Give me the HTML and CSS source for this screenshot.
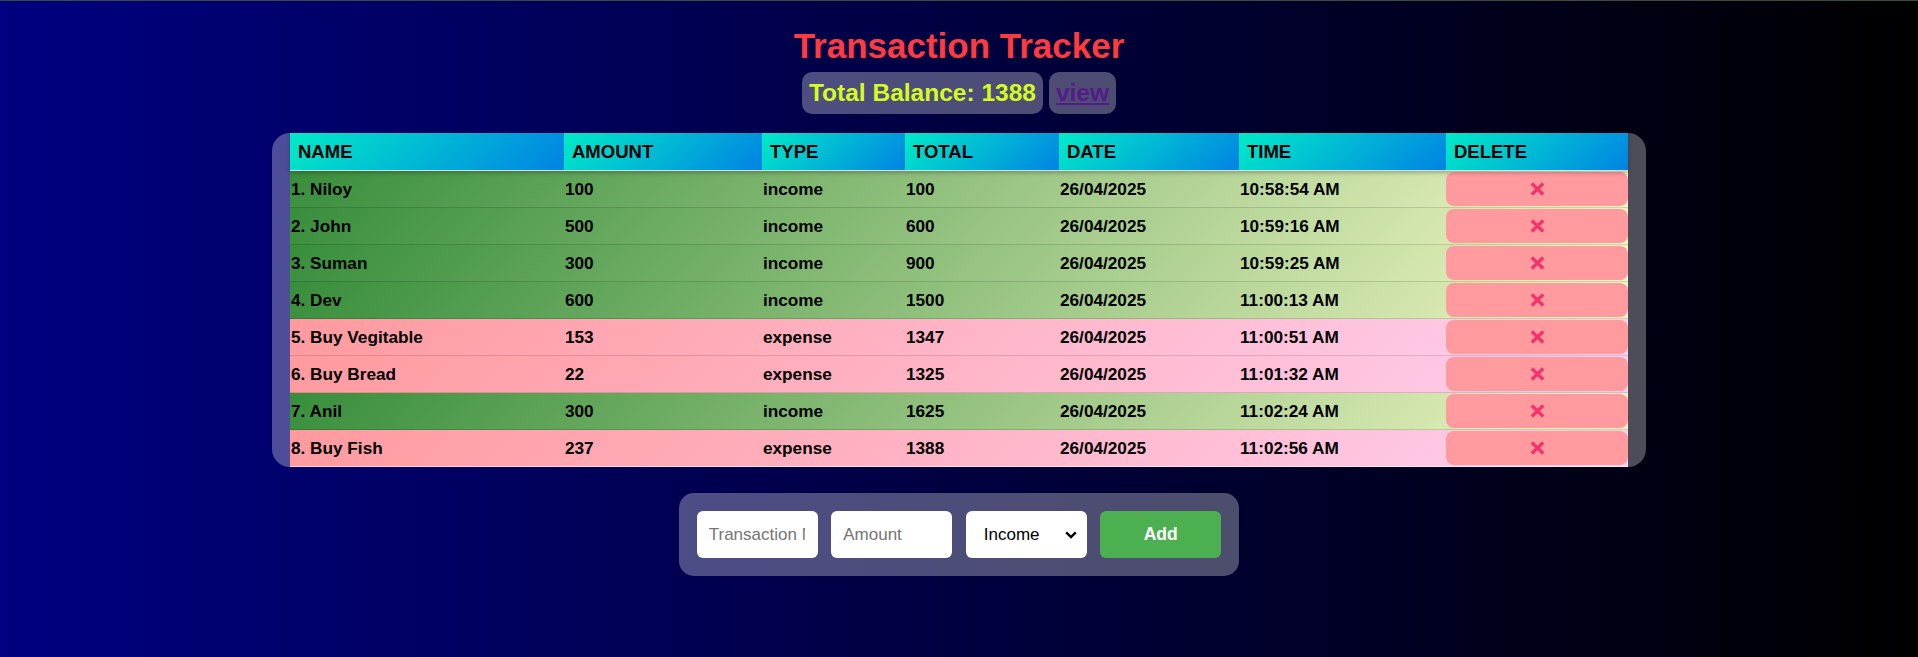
FILE: index.html
```html
<!DOCTYPE html>
<html lang="en">
<head>
<meta charset="utf-8">
<title>Transaction Tracker</title>
<link rel="stylesheet" href="styles.css">
</head>
<body>
<main class="app">
  <h1 class="title">Transaction Tracker</h1>
  <div class="balance-row">
    <span class="pill balance">Total Balance: 1388</span>
    <a class="pill view" href="#">view</a>
  </div>

  <section class="table-wrap">
    <div class="table">
      <div class="row head">
        <div class="th">NAME</div>
        <div class="th">AMOUNT</div>
        <div class="th">TYPE</div>
        <div class="th">TOTAL</div>
        <div class="th">DATE</div>
        <div class="th">TIME</div>
        <div class="th">DELETE</div>
      </div>

      <div class="row income">
        <div class="td">1. Niloy</div><div class="td">100</div><div class="td">income</div><div class="td">100</div><div class="td">26/04/2025</div><div class="td">10:58:54 AM</div>
        <div class="td del"><button class="del-btn" type="button"><svg width="15" height="14" viewBox="0 0 15 14"><path d="M1.8 1.5 L13.2 12.5 M13.2 1.5 L1.8 12.5"/></svg></button></div>
      </div>
      <div class="row income">
        <div class="td">2. John</div><div class="td">500</div><div class="td">income</div><div class="td">600</div><div class="td">26/04/2025</div><div class="td">10:59:16 AM</div>
        <div class="td del"><button class="del-btn" type="button"><svg width="15" height="14" viewBox="0 0 15 14"><path d="M1.8 1.5 L13.2 12.5 M13.2 1.5 L1.8 12.5"/></svg></button></div>
      </div>
      <div class="row income">
        <div class="td">3. Suman</div><div class="td">300</div><div class="td">income</div><div class="td">900</div><div class="td">26/04/2025</div><div class="td">10:59:25 AM</div>
        <div class="td del"><button class="del-btn" type="button"><svg width="15" height="14" viewBox="0 0 15 14"><path d="M1.8 1.5 L13.2 12.5 M13.2 1.5 L1.8 12.5"/></svg></button></div>
      </div>
      <div class="row income">
        <div class="td">4. Dev</div><div class="td">600</div><div class="td">income</div><div class="td">1500</div><div class="td">26/04/2025</div><div class="td">11:00:13 AM</div>
        <div class="td del"><button class="del-btn" type="button"><svg width="15" height="14" viewBox="0 0 15 14"><path d="M1.8 1.5 L13.2 12.5 M13.2 1.5 L1.8 12.5"/></svg></button></div>
      </div>
      <div class="row expense">
        <div class="td">5. Buy Vegitable</div><div class="td">153</div><div class="td">expense</div><div class="td">1347</div><div class="td">26/04/2025</div><div class="td">11:00:51 AM</div>
        <div class="td del"><button class="del-btn" type="button"><svg width="15" height="14" viewBox="0 0 15 14"><path d="M1.8 1.5 L13.2 12.5 M13.2 1.5 L1.8 12.5"/></svg></button></div>
      </div>
      <div class="row expense">
        <div class="td">6. Buy Bread</div><div class="td">22</div><div class="td">expense</div><div class="td">1325</div><div class="td">26/04/2025</div><div class="td">11:01:32 AM</div>
        <div class="td del"><button class="del-btn" type="button"><svg width="15" height="14" viewBox="0 0 15 14"><path d="M1.8 1.5 L13.2 12.5 M13.2 1.5 L1.8 12.5"/></svg></button></div>
      </div>
      <div class="row income">
        <div class="td">7. Anil</div><div class="td">300</div><div class="td">income</div><div class="td">1625</div><div class="td">26/04/2025</div><div class="td">11:02:24 AM</div>
        <div class="td del"><button class="del-btn" type="button"><svg width="15" height="14" viewBox="0 0 15 14"><path d="M1.8 1.5 L13.2 12.5 M13.2 1.5 L1.8 12.5"/></svg></button></div>
      </div>
      <div class="row expense last">
        <div class="td">8. Buy Fish</div><div class="td">237</div><div class="td">expense</div><div class="td">1388</div><div class="td">26/04/2025</div><div class="td">11:02:56 AM</div>
        <div class="td del"><button class="del-btn" type="button"><svg width="15" height="14" viewBox="0 0 15 14"><path d="M1.8 1.5 L13.2 12.5 M13.2 1.5 L1.8 12.5"/></svg></button></div>
      </div>
    </div>
  </section>

  <form class="add-form" onsubmit="return false">
    <input class="field" type="text" placeholder="Transaction Name">
    <input class="field" type="text" placeholder="Amount">
    <div class="select-wrap">
      <select class="field select">
        <option>Income</option>
        <option>Expense</option>
      </select>
      <svg class="chev" width="12" height="8" viewBox="0 0 12 8"><path d="M1.2 1.3 L6 6 L10.8 1.3"/></svg>
    </div>
    <button class="add-btn" type="submit">Add</button>
  </form>
</main>
</body>
</html>
```

FILE: styles.css
```css
html, body {
  margin: 0;
  padding: 0;
}

body {
  min-height: 657px;
  box-sizing: border-box;
  border-top: 1px solid #3b4a3b;
  background: linear-gradient(to right, #000080, #000000);
  font-family: "Liberation Sans", Arial, sans-serif;
  color: #000;
}

.app {
  display: flex;
  flex-direction: column;
  align-items: center;
}

.title {
  margin: 25px 0 7px;
  font-size: 35px;
  line-height: 39px;
  font-weight: bold;
  color: #ff3b40;
}

.balance-row {
  display: flex;
  align-items: center;
  gap: 6px;
}

.pill {
  display: block;
  padding: 7px;
  border-radius: 10px;
  background: rgba(255, 255, 255, 0.3);
  font-size: 24.5px;
  line-height: 28px;
  font-weight: bold;
}

.balance {
  color: #d4fc1e;
}

.view {
  color: #551a8b;
  text-decoration: underline;
}

.table-wrap {
  margin-top: 19px;
  padding: 0 18px;
  border-radius: 18px;
  background: rgba(255, 255, 255, 0.3);
}

.table {
  display: flex;
  flex-direction: column;
}

.row {
  display: grid;
  grid-template-columns: 274px 198px 143px 154px 180px 207px 182px;
  height: 36px;
  border-bottom: 1px solid rgba(0, 0, 0, 0.12);
}

.row.head {
  position: relative;
  z-index: 1;
  height: 37px;
  border-bottom: 1px solid #d6e2e2;
  box-shadow: 0 2px 4px rgba(0, 0, 0, 0.25);
}

.row.income {
  background: linear-gradient(135deg, #388e3c, #f0f6c3);
}

.row.expense {
  background: linear-gradient(135deg, #ff9a9e, #fecfef);
}

.row.last {
  border-bottom: 1px solid rgba(255, 255, 255, 0.55);
}

.th {
  display: flex;
  align-items: center;
  padding-left: 8px;
  background: linear-gradient(135deg, #00ebc7, #0083e3);
  font-size: 18.5px;
  font-weight: bold;
  color: #000;
}

.td {
  display: flex;
  align-items: center;
  padding-left: 1px;
  font-size: 17.2px;
  font-weight: bold;
  color: #000;
  white-space: nowrap;
}

.td.del {
  padding: 1px 0;
  align-items: flex-start;
}

.del-btn {
  width: 100%;
  height: 34px;
  border: none;
  border-radius: 8px;
  background: #ff9a9e;
  display: flex;
  align-items: center;
  justify-content: center;
  padding: 0;
  cursor: pointer;
}

.del-btn svg path {
  fill: none;
  stroke: #f5336b;
  stroke-width: 3.3;
}

.add-form {
  margin-top: 26px;
  display: flex;
  gap: 13.5px;
  padding: 18px;
  border-radius: 15px;
  background: rgba(255, 255, 255, 0.3);
}

.field {
  box-sizing: border-box;
  width: 121px;
  height: 47px;
  padding: 0 13px 0 12px;
  border: none;
  border-radius: 6px;
  background: #fff;
  font-family: "Liberation Sans", Arial, sans-serif;
  font-size: 17px;
  color: #000;
  outline: none;
}

.field::placeholder {
  color: #757575;
}

.select-wrap {
  position: relative;
  width: 121px;
  height: 47px;
}

.select {
  -webkit-appearance: none;
  appearance: none;
  padding-left: 18px;
  width: 100%;
}

.chev {
  position: absolute;
  right: 10px;
  top: 20px;
  pointer-events: none;
}

.chev path {
  fill: none;
  stroke: #000;
  stroke-width: 2.4;
}

.add-btn {
  width: 121px;
  height: 47px;
  border: none;
  border-radius: 6px;
  background: #4caf50;
  color: #fff;
  font-family: "Liberation Sans", Arial, sans-serif;
  font-size: 17.5px;
  font-weight: bold;
  cursor: pointer;
}
```
